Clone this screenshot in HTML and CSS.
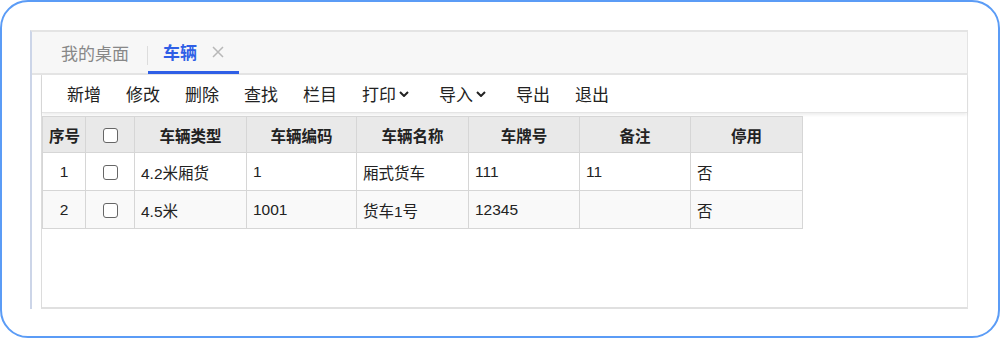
FILE: index.html
```html
<!DOCTYPE html>
<html>
<head>
<meta charset="utf-8">
<title>车辆</title>
<link rel="stylesheet" href="styles.css">
</head>
<body>
<div class="frame">
  <div class="panel">
    <div class="tabs">
      <span class="tab">我的桌面</span>
      <span class="sep"></span>
      <span class="tab active">车辆<svg class="close" viewBox="0 0 12 12" width="12" height="12"><path d="M1 1l10 10M11 1L1 11" stroke="#b8b8b8" stroke-width="1.5" fill="none"/></svg></span>
    </div>
    <div class="content">
      <div class="toolbar">
        <span class="btn">新增</span>
        <span class="btn">修改</span>
        <span class="btn">删除</span>
        <span class="btn">查找</span>
        <span class="btn">栏目</span>
        <span class="btn drop">打印<svg class="chev" viewBox="0 0 10 6" width="10" height="6"><path d="M1 1l4 4 4-4" fill="none" stroke="#222" stroke-width="2"/></svg></span>
        <span class="btn drop">导入<svg class="chev" viewBox="0 0 10 6" width="10" height="6"><path d="M1 1l4 4 4-4" fill="none" stroke="#222" stroke-width="2"/></svg></span>
        <span class="btn">导出</span>
        <span class="btn">退出</span>
      </div>
      <table class="grid">
        <colgroup>
          <col style="width:43px"><col style="width:49px"><col style="width:112px"><col style="width:110px">
          <col style="width:112px"><col style="width:111px"><col style="width:111px"><col style="width:112px">
        </colgroup>
        <thead>
          <tr>
            <th>序号</th><th><span class="box"></span></th><th>车辆类型</th><th>车辆编码</th>
            <th>车辆名称</th><th>车牌号</th><th>备注</th><th>停用</th>
          </tr>
        </thead>
        <tbody>
          <tr>
            <td class="num">1</td><td class="chk"><span class="box"></span></td><td>4.2米厢货</td><td>1</td>
            <td>厢式货车</td><td>111</td><td>11</td><td>否</td>
          </tr>
          <tr class="alt">
            <td class="num">2</td><td class="chk"><span class="box"></span></td><td>4.5米</td><td>1001</td>
            <td>货车1号</td><td>12345</td><td></td><td>否</td>
          </tr>
        </tbody>
      </table>
    </div>
  </div>
</div>
</body>
</html>
```
FILE: styles.css
```css
body {
  margin:0;
  padding:0;
  background:#fff;
  font-family:"Liberation Sans", "Noto Sans CJK SC", sans-serif;
  color:#222;
}

.frame {
  box-sizing:border-box;
  width:1000px;
  height:338px;
  border:2px solid #5b9cf6;
  border-radius:28px;
  padding:28px 30px 29px 28px;
}

.panel {
  display:flex;
  flex-direction:column;
  height:100%;
  border-top:2px solid #e4e4e4;
  border-left:2px solid #ccd5e8;
}

.tabs {
  display:flex;
  align-items:stretch;
  height:41px;
  background:#f7f7f7;
  border-bottom:2px solid #e4e4e4;
  border-right:1px solid #e4e4e4;
  padding-left:29px;
  font-size:17px;
}

.tab {
  display:flex;
  align-items:center;
  color:#888;
  padding-right:18px;
}

.sep {
  width:1px;
  background:#ddd;
  margin:14px 0 8px;
}

.tab.active {
  color:#2f5fe6;
  font-weight:bold;
  padding:0 15px;
  border-bottom:3px solid #2f5fe6;
  margin-bottom:-1px;
}

.close {
  margin:1px 0 0 15px;
}

.content {
  flex:1;
  margin-left:9px;
  border-left:1px solid #dcdcdc;
  border-right:1px solid #e4e4e4;
  border-bottom:2px solid #e0e0e0;
}

.toolbar {
  display:flex;
  align-items:center;
  height:37px;
  padding-left:25px;
  gap:25px;
  font-size:17px;
  border-bottom:1px solid #e4e4e4;
  box-shadow:0 2px 3px rgba(0,0,0,0.07);
}

.btn.drop {
  display:flex;
  align-items:center;
}

.chev {
  margin:1px 5px 0 3px;
}

.grid {
  border-collapse:collapse;
  table-layout:fixed;
  width:760px;
  margin-top:3px;
  font-size:15.5px;
}

.grid th, .grid td {
  border:1px solid #d6d6d6;
  padding:0 6px;
  text-align:left;
  white-space:nowrap;
}

.grid th {
  height:35px;
  background:#e9e9e9;
  font-weight:bold;
  text-align:center;
}

.grid td {
  height:37px;
  background:#fff;
}

.grid tr.alt td {
  background:#f9f9f9;
}

.grid td.num, .grid td.chk {
  text-align:center;
}

.box {
  display:inline-block;
  vertical-align:middle;
  box-sizing:border-box;
  width:15px;
  height:15px;
  border:1px solid #666;
  border-radius:3px;
  background:#fff;
}
```
